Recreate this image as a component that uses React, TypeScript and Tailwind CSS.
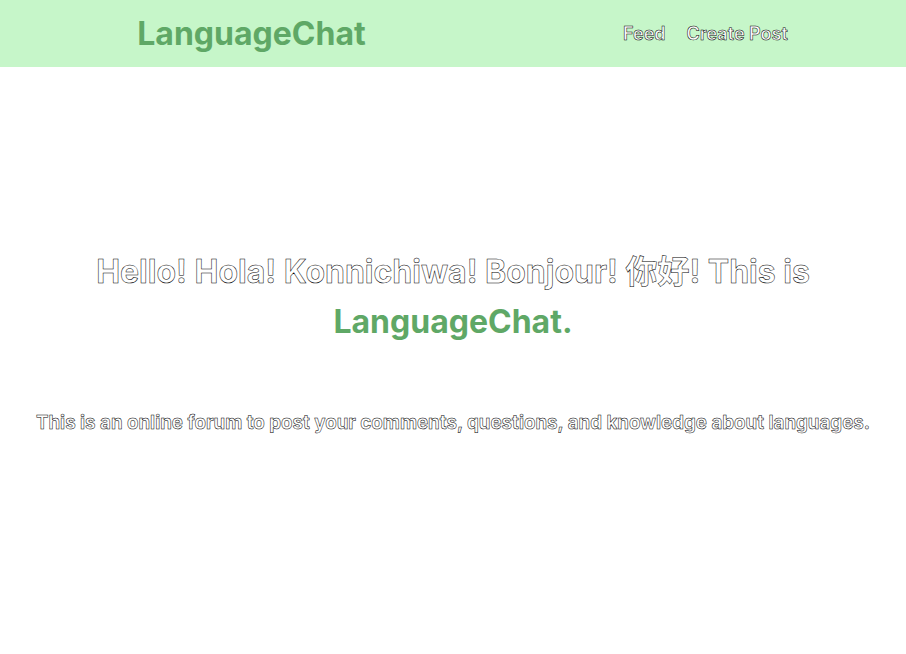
import React from 'react';

const outline = 'text-white [-webkit-text-stroke:0.5px_#000]';

const App = () => {
  return (
    <div className="min-h-screen bg-white font-['Inter','Noto_Sans_CJK_SC',sans-serif]">
      <header className="h-[67px] bg-[#c6f6c9] flex items-center">
        <div className="w-[453px] flex justify-center pl-[50px]">
          <h1 className="text-[32px] leading-[40px] font-bold text-[#5fa866]">LanguageChat</h1>
        </div>
        <nav className={`flex gap-[21px] ml-[170px] text-[18px] font-semibold ${outline}`}>
          <a href="#">Feed</a>
          <a href="#">Create Post</a>
        </nav>
      </header>

      <main className="flex flex-col items-center pt-[180px]">
        <h2 className={`text-[32px] leading-[50px] font-bold text-center max-w-[760px] ${outline}`}>
          Hello! Hola! Konnichiwa! Bonjour! 你好! This is{' '}
          <span className="text-[#5fa866] [-webkit-text-stroke:0]">LanguageChat.</span>
        </h2>
        <p className={`mt-[62px] text-[18.72px] font-bold text-center ${outline}`}>
          This is an online forum to post your comments, questions, and knowledge about languages.
        </p>
      </main>
    </div>
  );
};

export default App;
